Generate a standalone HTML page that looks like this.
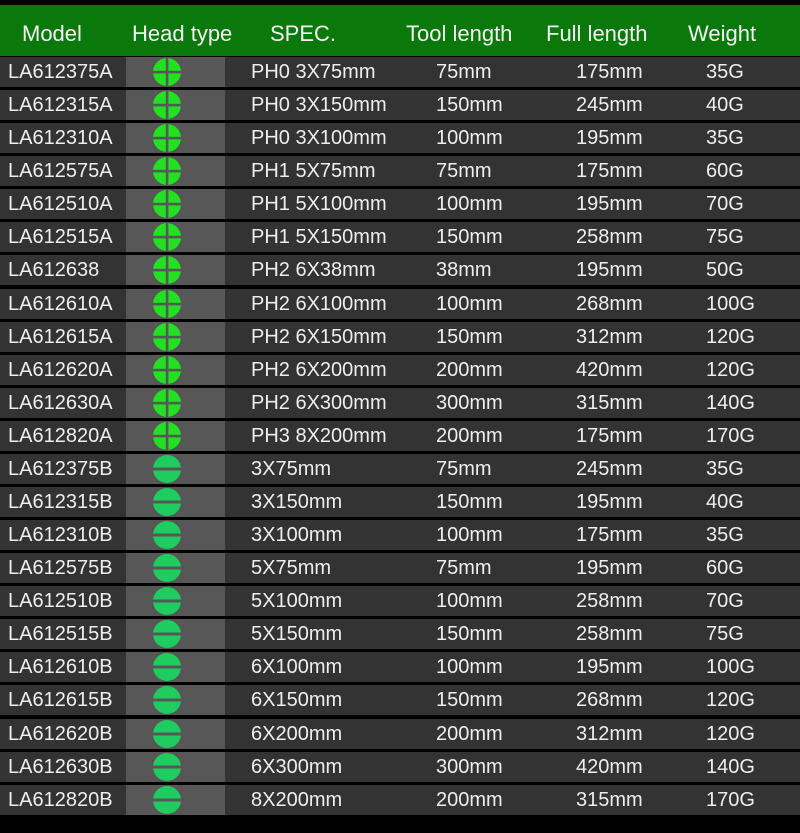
<!DOCTYPE html>
<html><head><meta charset="utf-8"><style>
*{margin:0;padding:0;box-sizing:border-box}
body{width:800px;height:833px;background:#000;font-family:"Liberation Sans",sans-serif;overflow:hidden;position:relative}
.hd{position:absolute;top:5px;left:0;width:800px;height:51px;background:#0b780b;color:#f2f2f2;font-size:22px}
.hd span{position:absolute;top:16px}
.rows{position:absolute;top:57px;left:0;width:800px}
.r{position:relative;height:30px;margin-bottom:3.09px;background:#333;color:#eee;font-size:20px}
.r .h{position:absolute;left:126px;top:0;width:99px;height:30px;background:#575757}
.r span{position:absolute;top:4px}
.r svg{position:absolute;left:153px;top:1px}
.a{left:8px}.s{left:251px}.t{left:436px}.f{left:576px}.w{left:706px}
</style></head><body>
<div class="hd"><span style="left:22px">Model</span><span style="left:132px">Head type</span><span style="left:270px">SPEC.</span><span style="left:406px">Tool length</span><span style="left:546px">Full length</span><span style="left:688px">Weight</span></div>
<div class="rows" id="rows"></div>
<script>
var P='<svg width="28" height="28"><circle cx="14" cy="14" r="14" fill="#22e022"/><rect x="12.8" y="0" width="2.6" height="28" fill="#575757"/><rect x="0" y="12.8" width="28" height="2.6" fill="#575757"/></svg>';
var S='<svg width="28" height="28"><circle cx="14" cy="14" r="14" fill="#1fcc60"/><rect x="0" y="12.5" width="28" height="3" fill="#575757"/></svg>';
var d=[["LA612375A","PH0 3X75mm","75mm","175mm","35G"],["LA612315A","PH0 3X150mm","150mm","245mm","40G"],["LA612310A","PH0 3X100mm","100mm","195mm","35G"],["LA612575A","PH1 5X75mm","75mm","175mm","60G"],["LA612510A","PH1 5X100mm","100mm","195mm","70G"],["LA612515A","PH1 5X150mm","150mm","258mm","75G"],["LA612638","PH2 6X38mm","38mm","195mm","50G"],["LA612610A","PH2 6X100mm","100mm","268mm","100G"],["LA612615A","PH2 6X150mm","150mm","312mm","120G"],["LA612620A","PH2 6X200mm","200mm","420mm","120G"],["LA612630A","PH2 6X300mm","300mm","315mm","140G"],["LA612820A","PH3 8X200mm","200mm","175mm","170G"],["LA612375B","3X75mm","75mm","245mm","35G"],["LA612315B","3X150mm","150mm","195mm","40G"],["LA612310B","3X100mm","100mm","175mm","35G"],["LA612575B","5X75mm","75mm","195mm","60G"],["LA612510B","5X100mm","100mm","258mm","70G"],["LA612515B","5X150mm","150mm","258mm","75G"],["LA612610B","6X100mm","100mm","195mm","100G"],["LA612615B","6X150mm","150mm","268mm","120G"],["LA612620B","6X200mm","200mm","312mm","120G"],["LA612630B","6X300mm","300mm","420mm","140G"],["LA612820B","8X200mm","200mm","315mm","170G"]];
var h='';d.forEach(function(r,i){h+='<div class="r"><div class="h"></div>'+(i<12?P:S)+'<span class="a">'+r[0]+'</span><span class="s">'+r[1]+'</span><span class="t">'+r[2]+'</span><span class="f">'+r[3]+'</span><span class="w">'+r[4]+'</span></div>';});
document.getElementById('rows').innerHTML=h;
</script>
</body></html>
